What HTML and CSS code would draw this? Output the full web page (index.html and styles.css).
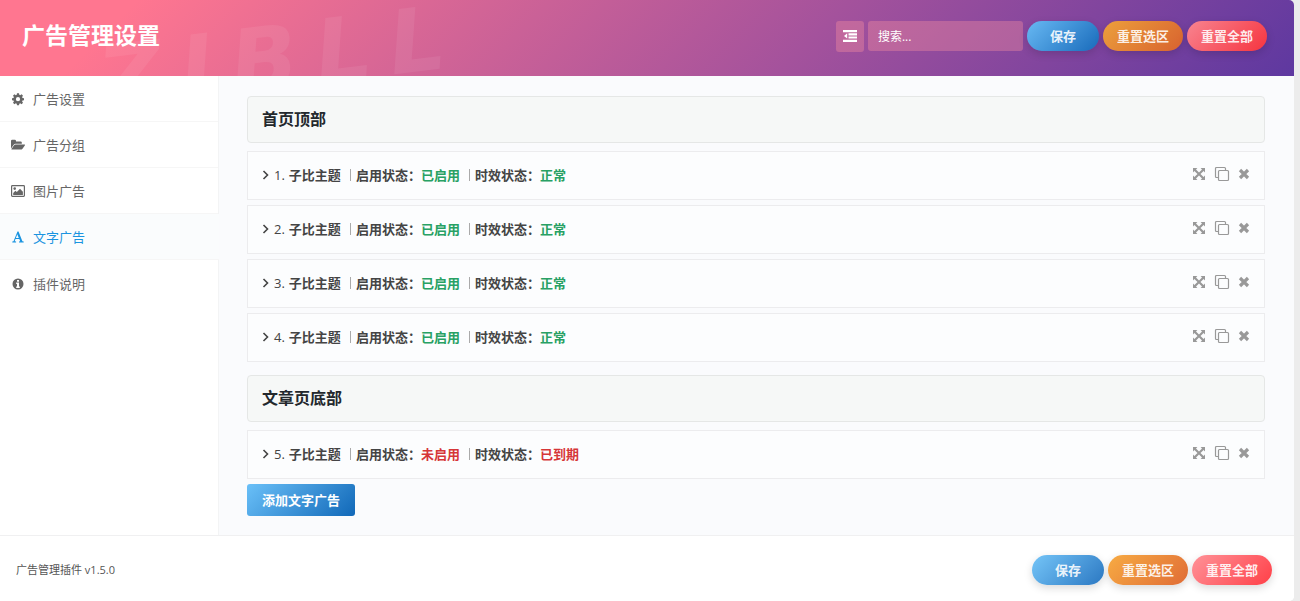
FILE: index.html
```html
<!DOCTYPE html>
<html lang="zh-CN">
<head>
  <meta charset="UTF-8" />
  <meta name="viewport" content="width=device-width, initial-scale=1.0" />
  <title>广告管理设置</title>
  <link rel="stylesheet" href="styles.css">
</head>
<body>
  <!-- shared icons -->
  <svg class="sprite" aria-hidden="true">
    <symbol id="i-chevron" viewBox="0 0 8 12"><path d="M1.5 2l4 4-4 4" fill="none" stroke="currentColor" stroke-width="1.6"/></symbol>
    <symbol id="i-move" viewBox="0 0 14 14"><path d="M1 1h4.400L4 2.400l3 3.200 3-3.200L8.600 1H13v4.400L11.600 4 8.500 7l3.100 3L13 8.600V13H8.600l1.400-1.400-3-3.200-3 3.200L5.400 13H1V8.600L2.400 10l3.100-3-3.100-3L1 5.400z" fill="currentColor"/></symbol>
    <symbol id="i-copy" viewBox="0 0 16 16"><path d="M4.500 11.500h-2a1 1 0 0 1-1-1v-8a1 1 0 0 1 1-1h8a1 1 0 0 1 1 1v2" fill="none" stroke="currentColor" stroke-width="1.200"/><rect x="4.500" y="4.500" width="10" height="10" rx="1" fill="none" stroke="currentColor" stroke-width="1.200"/></symbol>
    <symbol id="i-close" viewBox="0 0 12 12"><path d="M2 2l8 8M10 2l-8 8" stroke="currentColor" stroke-width="3.200"/></symbol>
  </svg>

  <div class="panel">
    <header class="header">
      <div class="watermark" aria-hidden="true">ZIBLL</div>
      <h1>广告管理设置</h1>
      <div class="actions">
        <button type="button" class="expand" aria-label="展开所有选项">
          <svg width="14" height="12" viewBox="0 0 14 12"><path d="M0 0h14v2.200H0zM5.500 3.300H14v2.100H5.500zM5.500 6.500H14v2.100H5.500zM0 9.800h14V12H0zM4.200 3.300v5.200L1 5.900z" fill="currentColor"/></svg>
        </button>
        <input type="text" class="search" placeholder="搜索..." aria-label="搜索" />
        <button type="button" class="btn save">保存</button>
        <button type="button" class="btn reset">重置选区</button>
        <button type="button" class="btn reset-all">重置全部</button>
      </div>
    </header>

    <div class="wrapper">
      <nav class="nav">
        <a href="#">
          <svg width="14" height="14" viewBox="0 0 14 14"><path fill-rule="evenodd" d="M6 1.200h2l.3 1.600.9.400 1.400-.9 1.400 1.400-.9 1.300.4 1 1.500.3v1.900l-1.500.3-.4.900.9 1.400-1.400 1.400-1.400-.9-.9.400-.3 1.500H6l-.3-1.500-.9-.4-1.400.9L2 10.800l.9-1.400-.4-.9L1 8.200V6.300l1.500-.3.4-1L2 3.700l1.400-1.400 1.400.9.900-.4zM7 5.100a2.100 2.100 0 1 0 0 4.200 2.100 2.100 0 0 0 0-4.200z" fill="currentColor"/></svg>
          <span>广告设置</span>
        </a>
        <a href="#">
          <svg width="14" height="14" viewBox="0 0 14 14"><path d="M0 10.500V3a1.200 1.200 0 0 1 1.200-1.200h2.600A1.200 1.200 0 0 1 5 3v.4h4.600a1.200 1.200 0 0 1 1.200 1.200v1.200H4.600a2.500 2.500 0 0 0-1.900.9z" fill="currentColor"/><path d="M4.600 6.600h8.800c.6 0 .8.4.4.900l-2.300 3.200a2.500 2.500 0 0 1-1.800.9H1c-.6 0-.8-.4-.4-.9l2.300-3.200a2.500 2.500 0 0 1 1.700-.9z" fill="currentColor"/></svg>
          <span>广告分组</span>
        </a>
        <a href="#">
          <svg width="14" height="14" viewBox="0 0 14 14"><rect x=".6" y="1.600" width="12.800" height="10.800" rx=".8" fill="none" stroke="currentColor" stroke-width="1.200"/><circle cx="3.700" cy="4.600" r="1.300" fill="currentColor"/><path d="M2.200 11V9l2.200-2.200 1.400 1.300L9 4.800l2.900 2.900V11z" fill="currentColor"/></svg>
          <span>图片广告</span>
        </a>
        <a href="#" class="active">
          <svg width="14" height="14" viewBox="0 0 14 14"><path fill-rule="evenodd" d="M6.500 1.500h1l3.900 9.700 1.300.4v.9H8v-.9l1.200-.3-.9-2.300H4.500l-.8 2.200 1.400.4v.9H1.300v-.9l1.200-.4zM6.300 4.300L4.900 8h2.900z" fill="currentColor"/></svg>
          <span>文字广告</span>
        </a>
        <a href="#">
          <svg width="14" height="14" viewBox="0 0 14 14"><path fill-rule="evenodd" d="M7 1.500a5.500 5.500 0 1 0 0 11 5.500 5.500 0 0 0 0-11zM6 3h2v1.700H6zM5.200 5.600H8v4h.8v1.300H5.200V9.600H6V6.900h-.8z" fill="currentColor"/></svg>
          <span>插件说明</span>
        </a>
      </nav>

      <main class="content">
        <section class="group">
          <h2>首页顶部</h2>
          <div class="item">
            <button type="button" class="item-title"><svg class="chevron"><use href="#i-chevron"/></svg><span class="num">1.</span><b>子比主题</b><i></i><b>启用状态：</b><b class="ok">已启用</b><i></i><b>时效状态：</b><b class="ok">正常</b></button>
            <div class="tools">
              <button type="button" aria-label="移动"><svg width="14" height="14"><use href="#i-move"/></svg></button>
              <button type="button" aria-label="复制"><svg width="16" height="16"><use href="#i-copy"/></svg></button>
              <button type="button" aria-label="删除"><svg width="12" height="12"><use href="#i-close"/></svg></button>
            </div>
          </div>
          <div class="item">
            <button type="button" class="item-title"><svg class="chevron"><use href="#i-chevron"/></svg><span class="num">2.</span><b>子比主题</b><i></i><b>启用状态：</b><b class="ok">已启用</b><i></i><b>时效状态：</b><b class="ok">正常</b></button>
            <div class="tools">
              <button type="button" aria-label="移动"><svg width="14" height="14"><use href="#i-move"/></svg></button>
              <button type="button" aria-label="复制"><svg width="16" height="16"><use href="#i-copy"/></svg></button>
              <button type="button" aria-label="删除"><svg width="12" height="12"><use href="#i-close"/></svg></button>
            </div>
          </div>
          <div class="item">
            <button type="button" class="item-title"><svg class="chevron"><use href="#i-chevron"/></svg><span class="num">3.</span><b>子比主题</b><i></i><b>启用状态：</b><b class="ok">已启用</b><i></i><b>时效状态：</b><b class="ok">正常</b></button>
            <div class="tools">
              <button type="button" aria-label="移动"><svg width="14" height="14"><use href="#i-move"/></svg></button>
              <button type="button" aria-label="复制"><svg width="16" height="16"><use href="#i-copy"/></svg></button>
              <button type="button" aria-label="删除"><svg width="12" height="12"><use href="#i-close"/></svg></button>
            </div>
          </div>
          <div class="item">
            <button type="button" class="item-title"><svg class="chevron"><use href="#i-chevron"/></svg><span class="num">4.</span><b>子比主题</b><i></i><b>启用状态：</b><b class="ok">已启用</b><i></i><b>时效状态：</b><b class="ok">正常</b></button>
            <div class="tools">
              <button type="button" aria-label="移动"><svg width="14" height="14"><use href="#i-move"/></svg></button>
              <button type="button" aria-label="复制"><svg width="16" height="16"><use href="#i-copy"/></svg></button>
              <button type="button" aria-label="删除"><svg width="12" height="12"><use href="#i-close"/></svg></button>
            </div>
          </div>
        </section>

        <section class="group">
          <h2>文章页底部</h2>
          <div class="item">
            <button type="button" class="item-title"><svg class="chevron"><use href="#i-chevron"/></svg><span class="num">5.</span><b>子比主题</b><i></i><b>启用状态：</b><b class="bad">未启用</b><i></i><b>时效状态：</b><b class="bad">已到期</b></button>
            <div class="tools">
              <button type="button" aria-label="移动"><svg width="14" height="14"><use href="#i-move"/></svg></button>
              <button type="button" aria-label="复制"><svg width="16" height="16"><use href="#i-copy"/></svg></button>
              <button type="button" aria-label="删除"><svg width="12" height="12"><use href="#i-close"/></svg></button>
            </div>
          </div>
        </section>

        <button type="button" class="add">添加文字广告</button>
      </main>
    </div>

    <footer class="footer">
      <div class="copyright">广告管理插件 v1.5.0</div>
      <div class="actions">
        <button type="button" class="btn save">保存</button>
        <button type="button" class="btn reset">重置选区</button>
        <button type="button" class="btn reset-all">重置全部</button>
      </div>
    </footer>
  </div>
</body>
</html>
```
FILE: styles.css
```css
* {
  box-sizing: border-box;
}

body {
  margin: 0;
  padding-right: 6px;
  background: #ececec;
  color: #444;
  font: 13px/20px "Open Sans", "Noto Sans CJK SC", sans-serif;
}

button, input {
  font: inherit;
  border: none;
  margin: 0;
}

button {
  cursor: pointer;
}

.sprite {
  display: none;
}

.panel {
  display: flex;
  flex-direction: column;
  min-height: 100vh;
  background: #fff;
  border-radius: 0 5px 5px 0;
  overflow: hidden;
}

/* header */
.header {
  position: relative;
  display: flex;
  align-items: center;
  justify-content: space-between;
  height: 76px;
  padding: 0 27px 4px 22px;
  background: linear-gradient(135deg, #ff7690 10%, #a4529c 62%, #5e38a0);
  overflow: hidden;
}

.header h1 {
  position: relative;
  margin: 0;
  padding-bottom: 3px;
  color: #fff;
  font-size: 23px;
  line-height: 32px;
}

.watermark {
  position: absolute;
  left: 98px;
  top: 14px;
  color: rgba(255, 255, 255, 0.07);
  font: italic bold 88px/88px "DejaVu Sans", sans-serif;
  letter-spacing: 18px;
  transform: rotate(-7deg);
}

.actions {
  position: relative;
  display: flex;
  align-items: center;
  gap: 4px;
}

.expand {
  display: flex;
  align-items: center;
  justify-content: center;
  width: 28px;
  height: 31px;
  padding: 0;
  color: #fff;
  background: rgba(255, 150, 160, 0.35);
  border-radius: 3px;
}

.search {
  width: 155px;
  height: 30px;
  padding: 0 10px;
  color: #fff;
  font-size: 12px;
  background: rgba(255, 150, 160, 0.35);
  border-radius: 3px;
}

.search::placeholder {
  color: #fff;
}

.btn {
  height: 30px;
  padding: 0 14px;
  color: rgba(255, 255, 255, 0.9);
  font-weight: bold;
  border-radius: 15px;
  box-shadow: 0 3px 8px rgba(0, 0, 0, 0.15);
}

.save {
  padding: 0 23px;
  background: linear-gradient(135deg, #68b9f3, #196bbb);
}

.reset {
  background: linear-gradient(135deg, #eca03c, #d8622f);
}

.reset-all {
  background: linear-gradient(135deg, #f88490, #f6343f);
}

/* sidebar */
.wrapper {
  display: flex;
  flex: 1;
  background: #fafbfd;
}

.nav {
  width: 218px;
  background: #fff;
  box-shadow: 1px 0 0 #f3f4f5;
}

.nav a {
  display: flex;
  align-items: center;
  gap: 8px;
  height: 46px;
  padding: 1px 11px 0;
  color: #666;
  text-decoration: none;
  border-bottom: 1px solid #f6f6f6;
}

.nav a:last-child {
  border-bottom: none;
}

.nav .active {
  color: #1a94e0;
  width: 219px;
  background: #fafcfd;
}

/* ads */
.content {
  flex: 1;
  padding: 20px 29px 19px;
}

.group {
  margin-bottom: 5px;
}

.group + .group {
  margin-top: 13px;
}

.group h2 {
  margin: 0 0 8px;
  padding: 0 14px;
  color: #23282d;
  font-size: 16px;
  line-height: 45px;
  background: #f6f8f7;
  border: 1px solid #e5e7e6;
  border-radius: 4px;
}

.item {
  display: flex;
  align-items: center;
  justify-content: space-between;
  height: 49px;
  padding: 0 14px;
  background: #fcfdfe;
  border: 1px solid #ececee;
}

.item + .item {
  margin-top: 5px;
}

.item-title {
  display: flex;
  align-items: center;
  padding: 0 0 2px;
  color: #444;
  background: none;
}

.item-title i {
  width: 1px;
  height: 12px;
  margin: 0 5px 0 9px;
  background: #aaa;
}

.chevron {
  width: 8px;
  height: 12px;
  margin-right: 4px;
}

.num {
  margin-right: 4px;
}

.ok {
  color: #28a164;
}

.bad {
  color: #d63638;
}

.tools {
  display: flex;
  align-items: center;
  gap: 8px;
  padding-bottom: 4px;
}

.tools button {
  display: flex;
  padding: 0;
  color: #999;
  background: none;
}

.add {
  display: block;
  height: 32px;
  padding: 0 15px;
  color: #fff;
  font-weight: bold;
  background: linear-gradient(135deg, #6ac0f8, #1168b8);
  border-radius: 3px;
}

/* footer */
.footer {
  display: flex;
  align-items: center;
  justify-content: space-between;
  height: 66px;
  padding: 2px 22px 0 16px;
  background: #fff;
  border-top: 1px solid #f0f0f1;
}

.footer .save {
  background: linear-gradient(135deg, #75c5f8, #2b78c2);
}

.footer .reset {
  background: linear-gradient(135deg, #f7ab43, #e06c36);
}

.footer .reset-all {
  background: linear-gradient(135deg, #ff9298, #ff4048);
}

.copyright {
  color: #555;
  font-size: 11px;
}
```
